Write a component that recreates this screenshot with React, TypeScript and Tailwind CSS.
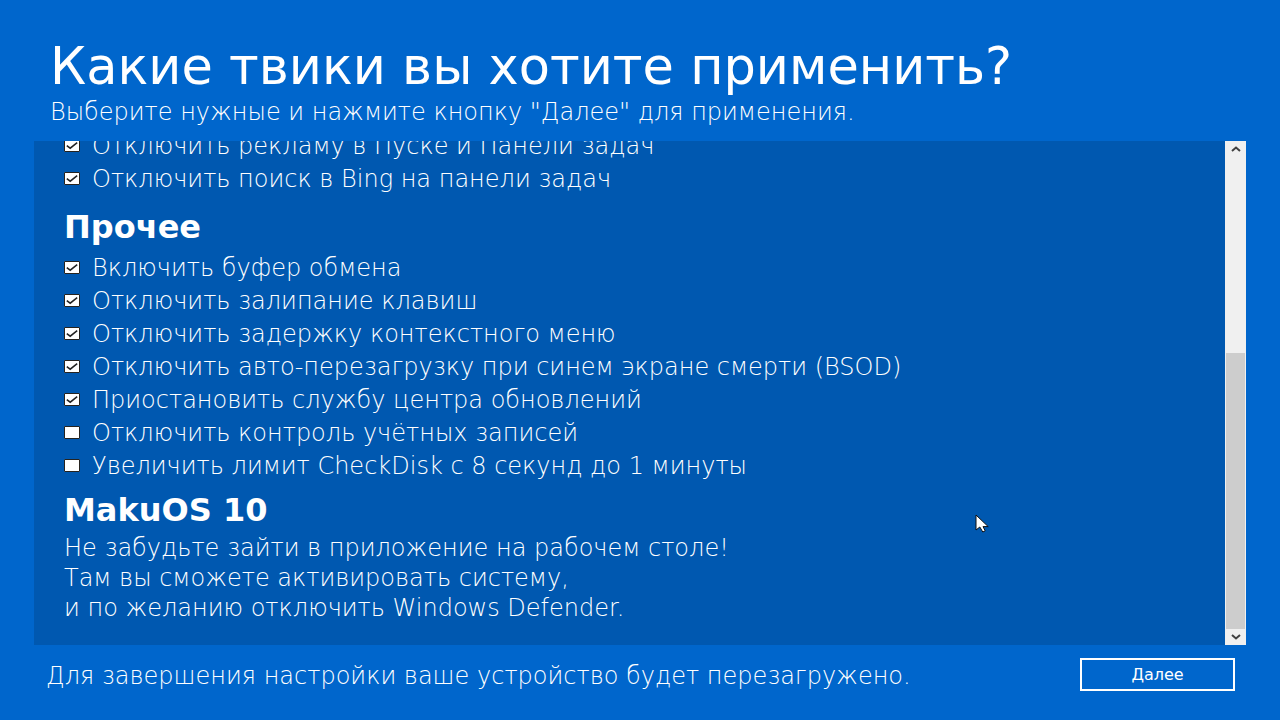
import { useState } from "react";

type Tweak = { id: string; label: string; on: boolean };

const taskbarTweaks: Tweak[] = [
  { id: "ads", label: "Отключить рекламу в Пуске и Панели задач", on: true },
  { id: "bing", label: "Отключить поиск в Bing на панели задач", on: true },
];

const otherTweaks: Tweak[] = [
  { id: "clipboard", label: "Включить буфер обмена", on: true },
  { id: "sticky", label: "Отключить залипание клавиш", on: true },
  { id: "menu-delay", label: "Отключить задержку контекстного меню", on: true },
  { id: "bsod", label: "Отключить авто-перезагрузку при синем экране смерти (BSOD)", on: true },
  { id: "updates", label: "Приостановить службу центра обновлений", on: true },
  { id: "uac", label: "Отключить контроль учётных записей", on: false },
  { id: "checkdisk", label: "Увеличить лимит CheckDisk с 8 секунд до 1 минуты", on: false },
];

function TweakRow({ tweak }: { tweak: Tweak }) {
  const [on, setOn] = useState(tweak.on);
  return (
    <li className="flex h-[33px] items-center gap-3">
      <span className="grid h-[13px] w-4 shrink-0">
        <input
          id={tweak.id}
          type="checkbox"
          checked={on}
          onChange={(e) => setOn(e.target.checked)}
          className="col-start-1 row-start-1 h-[13px] w-4 appearance-none rounded-[1px] border border-[#26231f] bg-white"
        />
        {on && (
          <svg viewBox="0 0 16 13" className="pointer-events-none col-start-1 row-start-1 h-[13px] w-4" fill="none" stroke="#222" strokeWidth="1.5" aria-hidden="true">
            <path d="M2.8 6.6 6.2 9.2 13.2 3.6" />
          </svg>
        )}
      </span>
      <label htmlFor={tweak.id} className="whitespace-nowrap">
        {tweak.label}
      </label>
    </li>
  );
}

function TweakList({ tweaks }: { tweaks: Tweak[] }) {
  return (
    <ul>
      {tweaks.map((t) => (
        <TweakRow key={t.id} tweak={t} />
      ))}
    </ul>
  );
}

function ScrollBar() {
  return (
    <div className="flex w-[21px] shrink-0 flex-col bg-[#f0f0f0]">
      <button type="button" aria-label="Прокрутить вверх" className="flex h-4 items-center justify-center">
        <svg viewBox="0 0 10 6" className="h-[6px] w-[10px]" fill="none" stroke="#404040" strokeWidth="2" aria-hidden="true">
          <path d="M1 5 5 1.6 9 5" />
        </svg>
      </button>
      <div className="grow-[196] basis-0" />
      <div className="mx-px grow-[276] basis-0 bg-[#cdcdcd]" />
      <button type="button" aria-label="Прокрутить вниз" className="flex h-4 items-center justify-center">
        <svg viewBox="0 0 10 6" className="h-[6px] w-[10px]" fill="none" stroke="#404040" strokeWidth="2" aria-hidden="true">
          <path d="M1 1 5 4.4 9 1" />
        </svg>
      </button>
    </div>
  );
}

export default function App() {
  return (
    <main className="relative flex h-screen flex-col overflow-hidden bg-[#0066cc] px-[34px] font-['DejaVu_Sans',sans-serif] text-[24px] leading-[30px] font-extralight text-white">
      <header className="flex h-[141px] shrink-0 flex-col pt-9 pl-4">
        <h1 className="text-[51px] leading-[61px] font-normal whitespace-nowrap">Какие твики вы хотите применить?</h1>
        <p className="whitespace-nowrap">Выберите нужные и нажмите кнопку "Далее" для применения.</p>
      </header>

      <section className="flex min-h-0 grow bg-[#0058b0]">
        <div className="flex grow flex-col justify-end overflow-hidden pb-[22px] pl-[30px]">
          <TweakList tweaks={taskbarTweaks} />
          <h2 className="mt-3 mb-1 text-[32px] leading-10 font-bold">Прочее</h2>
          <TweakList tweaks={otherTweaks} />
          <h2 className="mt-2 mb-[3px] text-[32px] leading-10 font-bold">MakuOS 10</h2>
          <p>
            Не забудьте зайти в приложение на рабочем столе!
            <br />
            Там вы сможете активировать систему,
            <br />и по желанию отключить Windows Defender.
          </p>
        </div>
        <ScrollBar />
      </section>

      <footer className="flex h-[75px] shrink-0 items-start justify-between pt-[13px] pr-[11px] pl-3">
        <p className="pt-[3px] whitespace-nowrap">Для завершения настройки ваше устройство будет перезагружено.</p>
        <button type="button" className="h-[33px] w-[155px] border-2 border-white text-base leading-5 font-normal">
          Далее
        </button>
      </footer>

      <svg viewBox="0 0 14 20" className="pointer-events-none absolute top-[514px] left-[975px] h-5 w-[14px]" aria-hidden="true">
        <path d="M1 1v15l3.8-3 3 5 2.4-1.2-2.2-4.2h5.2z" fill="#fff" stroke="#111" strokeWidth="1" />
      </svg>
    </main>
  );
}
